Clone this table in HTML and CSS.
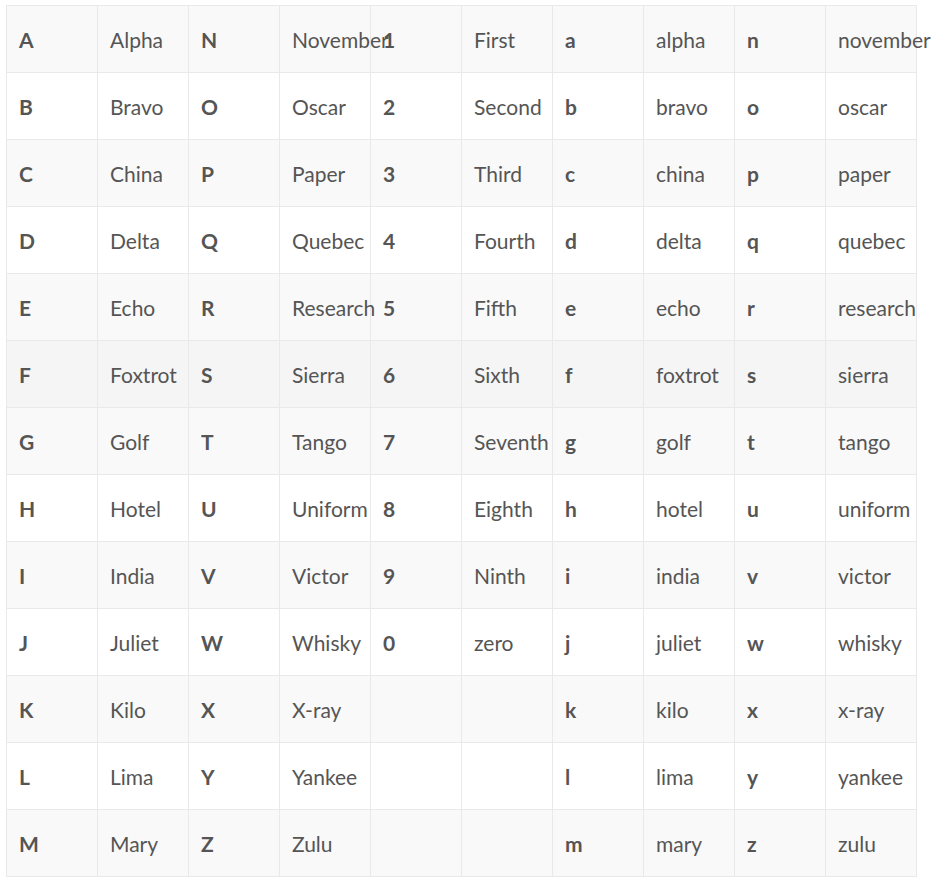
FILE: index.html
```html
<!DOCTYPE html>
<html>
<head>
<meta charset="utf-8">
<link rel="stylesheet" href="styles.css">
</head>
<body>
<table class="alpha">
<tbody>
<tr><td class="k">A</td><td>Alpha</td><td class="k">N</td><td>November</td><td class="k">1</td><td>First</td><td class="k">a</td><td>alpha</td><td class="k">n</td><td>november</td></tr>
<tr><td class="k">B</td><td>Bravo</td><td class="k">O</td><td>Oscar</td><td class="k">2</td><td>Second</td><td class="k">b</td><td>bravo</td><td class="k">o</td><td>oscar</td></tr>
<tr><td class="k">C</td><td>China</td><td class="k">P</td><td>Paper</td><td class="k">3</td><td>Third</td><td class="k">c</td><td>china</td><td class="k">p</td><td>paper</td></tr>
<tr><td class="k">D</td><td>Delta</td><td class="k">Q</td><td>Quebec</td><td class="k">4</td><td>Fourth</td><td class="k">d</td><td>delta</td><td class="k">q</td><td>quebec</td></tr>
<tr><td class="k">E</td><td>Echo</td><td class="k">R</td><td>Research</td><td class="k">5</td><td>Fifth</td><td class="k">e</td><td>echo</td><td class="k">r</td><td>research</td></tr>
<tr class="hover"><td class="k">F</td><td>Foxtrot</td><td class="k">S</td><td>Sierra</td><td class="k">6</td><td>Sixth</td><td class="k">f</td><td>foxtrot</td><td class="k">s</td><td>sierra</td></tr>
<tr><td class="k">G</td><td>Golf</td><td class="k">T</td><td>Tango</td><td class="k">7</td><td>Seventh</td><td class="k">g</td><td>golf</td><td class="k">t</td><td>tango</td></tr>
<tr><td class="k">H</td><td>Hotel</td><td class="k">U</td><td>Uniform</td><td class="k">8</td><td>Eighth</td><td class="k">h</td><td>hotel</td><td class="k">u</td><td>uniform</td></tr>
<tr><td class="k">I</td><td>India</td><td class="k">V</td><td>Victor</td><td class="k">9</td><td>Ninth</td><td class="k">i</td><td>india</td><td class="k">v</td><td>victor</td></tr>
<tr><td class="k">J</td><td>Juliet</td><td class="k">W</td><td>Whisky</td><td class="k">0</td><td>zero</td><td class="k">j</td><td>juliet</td><td class="k">w</td><td>whisky</td></tr>
<tr><td class="k">K</td><td>Kilo</td><td class="k">X</td><td>X-ray</td><td class="k"></td><td></td><td class="k">k</td><td>kilo</td><td class="k">x</td><td>x-ray</td></tr>
<tr><td class="k">L</td><td>Lima</td><td class="k">Y</td><td>Yankee</td><td class="k"></td><td></td><td class="k">l</td><td>lima</td><td class="k">y</td><td>yankee</td></tr>
<tr><td class="k">M</td><td>Mary</td><td class="k">Z</td><td>Zulu</td><td class="k"></td><td></td><td class="k">m</td><td>mary</td><td class="k">z</td><td>zulu</td></tr>
</tbody>
</table>
</body>
</html>
```
FILE: styles.css
```css
html, body {
  margin: 0;
  padding: 0;
  background: #fff;
}
body {
  padding: 5px 0 0 6px;
  font-family: Lato, "Open Sans", sans-serif;
  font-size: 21px;
  color: #555;
}
.alpha {
  border-collapse: collapse;
  table-layout: fixed;
  width: 911px;
}
.alpha td {
  width: 91px;
  height: 67px;
  padding: 0 12px;
  border: 1px solid #e9e9e9;
  vertical-align: middle;
  white-space: nowrap;
  overflow: visible;
  box-sizing: border-box;
}
.alpha tr:nth-child(odd) td {
  background: #f9f9f9;
}
.alpha tr.hover td {
  background: #f5f5f5;
}
.alpha td.k {
  font-weight: bold;
}
```
